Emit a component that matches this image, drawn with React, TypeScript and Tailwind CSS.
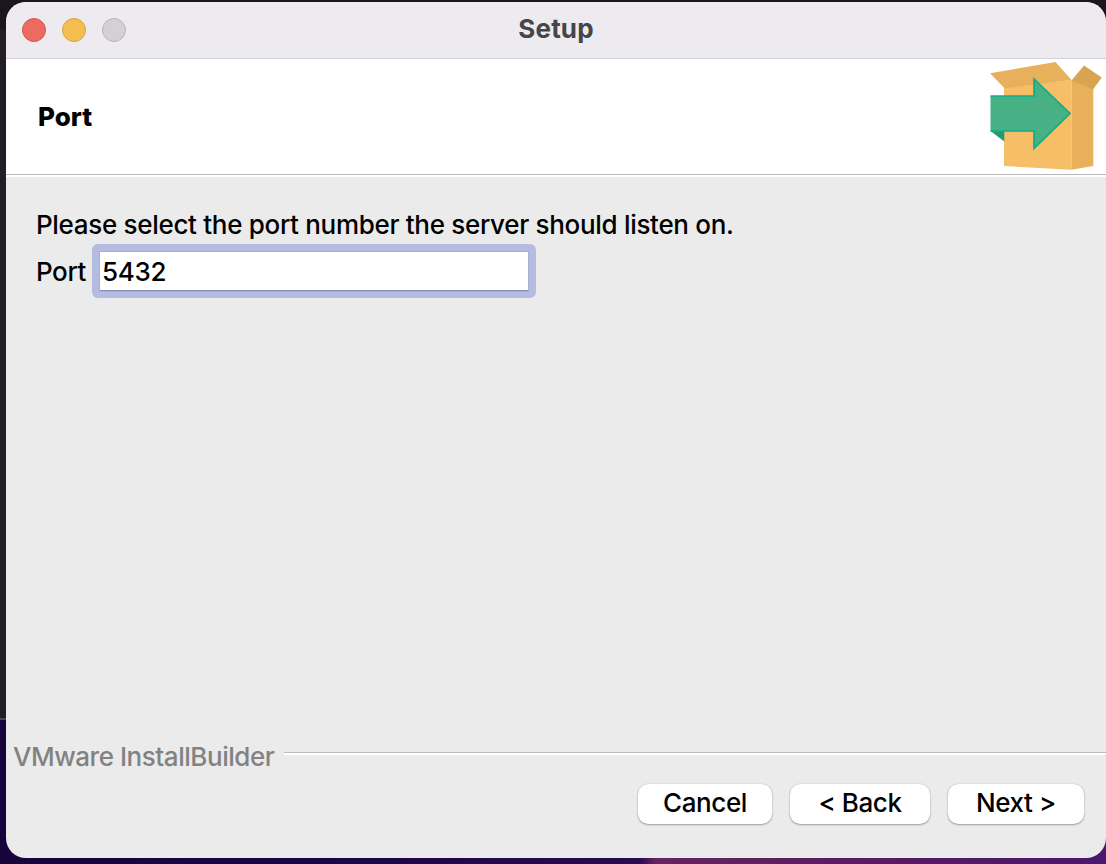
import { useState } from "react";

function BoxIcon() {
  return (
    <svg width="120" height="115" viewBox="986 59 120 115" aria-hidden="true">
      <path d="M1004 87.5 1071.5 80V169.8L1004 166Z" fill="#f6be66" />
      <path d="M1071.5 80 1093.3 89V166L1071.5 169.8Z" fill="#e8b05b" />
      <path d="M990 73.3 1055.5 62 1071.5 80 1004.5 88.3Z" fill="#e8b05b" />
      <path d="M1071.5 80.5 1084 65.5 1101.8 77.5 1093 89.5Z" fill="#d9a451" />
      <path d="M990.5 131H1004.3V141.5Z" fill="#249a70" />
      <path d="M990.5 96H1034V79L1070 113.5 1034 148.5V131H990.5Z" fill="#48b085" />
      <path d="M990.5 96H1034V79L1070 113.5 1034 148.5V131H990.5" fill="none" stroke="#0fae86" strokeWidth="1.7" />
    </svg>
  );
}

function Light({ color }: { color: string }) {
  return <span className={`size-6 rounded-full border ${color}`} />;
}

function PushButton({ label, size }: { label: string; size: string }) {
  return (
    <button
      className={`flex h-10 items-center justify-center rounded-[10px] bg-white pb-0.5 text-[26px] leading-none tracking-[-0.42px] shadow-[0_0_1px_rgba(0,0,0,0.3),0_1px_2px_rgba(0,0,0,0.3)] ${size}`}
    >
      {label}
    </button>
  );
}

export default function App() {
  const [port, setPort] = useState("5432");

  return (
    <div className="flex h-[864px] w-[1106px] overflow-hidden bg-[linear-gradient(90deg,#17043c_0px,#1a0546_320px,#2a0a52_640px,#652361_655px,#5a1c62_850px,#4b1670_1106px)] font-['Inter','Liberation_Sans',sans-serif] font-[450] text-black">
      <div className="-mr-1.5 flex h-[720px] w-1.5 flex-col border-b-2 border-[#4a484d] bg-[#211e26]" />
      <div className="flex h-[864px] w-full flex-col bg-[linear-gradient(#19161e,#19161e)] bg-[length:100%_30px] bg-no-repeat pt-0.5 pl-1.5">
        <div className="flex h-[856px] flex-col overflow-hidden rounded-[20px] bg-[#ebebeb]">
          <header className="grid h-[57px] shrink-0 grid-cols-[1fr_auto_1fr] items-center border-b border-[#d5d3d7] bg-[#eeebf0] px-4">
            <div className="flex gap-4">
              <Light color="border-[#d95449] bg-[#ec6b60]" />
              <Light color="border-[#d9a23c] bg-[#f4bf50]" />
              <Light color="border-[#b6b4b9] bg-[#d3d1d6]" />
            </div>
            <h1 className="pb-0.5 text-[26px] leading-none font-bold tracking-[0.15px] text-[#464548]">Setup</h1>
          </header>

          <section className="flex h-[116px] shrink-0 items-center justify-between border-b border-[#b9b9b9] bg-white pl-8">
            <h2 className="text-[26px] leading-none font-extrabold">Port</h2>
            <BoxIcon />
          </section>

          <main className="flex grow flex-col border-t-2 border-white pt-8 pl-[30px]">
            <p className="h-[35px] text-[26px] leading-[32px] tracking-[-0.31px]">
              Please select the port number the server should listen on.
            </p>
            <label className="flex h-[54px] items-center text-[26px] leading-none">
              <span className="w-14 pt-0.5 tracking-[-0.4px]">Port</span>
              <span className="flex h-[54px] w-[444px] rounded-md bg-[#b4bce2] px-2 pt-2 pb-[7px]">
                <input
                  value={port}
                  onChange={(e) => setPort(e.target.value)}
                  className="w-full border-b border-[#8791b7] bg-white pl-0.5 tracking-[-0.3px] shadow-[0_0_0_1px_#a6aed6] outline-none"
                />
              </span>
            </label>
          </main>

          <footer className="flex h-[116px] shrink-0 flex-col">
            <div className="flex h-[30px] items-start pl-[7px]">
              <span className="w-[271px] text-[26px] leading-[30px] tracking-[-0.46px] whitespace-nowrap text-[#828282]">
                VMware InstallBuilder
              </span>
              <div className="mt-2.5 h-[3px] grow border-t border-[#bcbcbc] bg-white" />
            </div>
            <div className="mt-3 flex justify-end pr-[22px]">
              <PushButton label="Cancel" size="mr-[18px] w-[134px]" />
              <PushButton label="< Back" size="mr-[18px] w-[140px]" />
              <PushButton label="Next >" size="w-[136px]" />
            </div>
          </footer>
        </div>
      </div>
    </div>
  );
}
